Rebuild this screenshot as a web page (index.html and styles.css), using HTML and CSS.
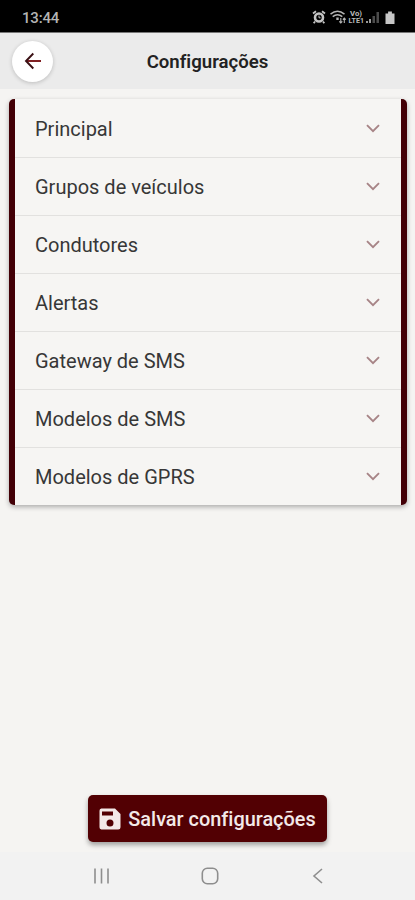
FILE: index.html
```html
<!DOCTYPE html>
<html lang="pt-BR">

<head>
    <meta charset="UTF-8">
    <meta name="viewport" content="width=device-width, initial-scale=1.0">
    <title>Configurações</title>
    <link rel="stylesheet" href="styles.css">
</head>

<body>
    <div class="status">
        <span class="time">13:44</span>
        <svg class="status-icons" width="84" height="16" viewBox="0 0 84 16">
            <!-- alarm -->
            <g fill="none" stroke="#c4c4c4">
                <circle cx="8" cy="8.5" r="4" stroke-width="2.6" />
                <path d="M8 6.5v2.3h1.6" stroke-width="1" />
                <path d="M2 4.5l3-2.3M14 4.5l-3-2.3M4 12.5l-1.3 1.8M12 12.5l1.3 1.8" stroke-width="1.8" />
            </g>
            <!-- wifi -->
            <g fill="none" stroke="#b5b5b5" stroke-width="1.5">
                <path d="M19.5 5.1q7-5.6 14 0" />
                <path d="M21.7 7.7q4.8-4 9.6 0" />
                <path d="M26.5 8.5v2.5" stroke-width="2.4" />
                <path d="M29.8 9v5M28.3 12.3l1.5 1.7 1.5-1.7M33.3 14V9M31.9 10.7l1.4-1.6 1.4 1.6" stroke-width="1.1" />
            </g>
            <g class="volte">
                <text x="39" y="6.6" textLength="12" lengthAdjust="spacingAndGlyphs">Vo)</text>
                <text x="37.5" y="14.4" textLength="15.5" lengthAdjust="spacingAndGlyphs">LTE1</text>
            </g>
            <!-- signal -->
            <path d="M55 14v-2h2v2zM58 14v-4h2v4z" fill="#999" />
            <path d="M61.5 14V7H64v7zM65.5 14V3H68v11z" fill="#4c4c4c" />
            <!-- battery -->
            <path d="M74.5 4.5h2.6V2.5h3.8v2h2.6V15h-9z" fill="#c6c6c6" />
        </svg>
    </div>

    <div class="header">
        <button class="back">
            <svg width="18" height="18" viewBox="0 0 18 18" fill="none" stroke-width="1.9">
                <path d="M2 9h15" stroke="#7a1518" />
                <path d="M9.3 1.5L2 9l7.3 7.5" stroke="#3a1014" />
            </svg>
        </button>
        <h1>Configurações</h1>
    </div>

    <div class="content">
        <ul class="menu">
            <li><span>Principal</span><svg class="arrow" viewBox="0 0 14 9"><path d="M1 1.2l6 6 6-6" /></svg></li>
            <li><span>Grupos de veículos</span><svg class="arrow" viewBox="0 0 14 9"><path d="M1 1.2l6 6 6-6" /></svg></li>
            <li><span>Condutores</span><svg class="arrow" viewBox="0 0 14 9"><path d="M1 1.2l6 6 6-6" /></svg></li>
            <li><span>Alertas</span><svg class="arrow" viewBox="0 0 14 9"><path d="M1 1.2l6 6 6-6" /></svg></li>
            <li><span>Gateway de SMS</span><svg class="arrow" viewBox="0 0 14 9"><path d="M1 1.2l6 6 6-6" /></svg></li>
            <li><span>Modelos de SMS</span><svg class="arrow" viewBox="0 0 14 9"><path d="M1 1.2l6 6 6-6" /></svg></li>
            <li><span>Modelos de GPRS</span><svg class="arrow" viewBox="0 0 14 9"><path d="M1 1.2l6 6 6-6" /></svg></li>
        </ul>

        <button class="save">
            <svg width="22" height="22" viewBox="0 0 22 22">
                <path fill="#f3e9e8" fill-rule="evenodd"
                    d="M2.3 0.5H16L21.5 6v13.2a2.3 2.3 0 0 1-2.3 2.3H2.3A2.3 2.3 0 0 1 0.5 19.2V2.8A2.3 2.3 0 0 1 2.3 0.5zM3 3.5v4h11v-4zM11 11.4a3.5 3.5 0 1 0 0 7a3.5 3.5 0 1 0 0-7z" />
            </svg>
            <span>Salvar configurações</span>
        </button>
    </div>

    <div class="navbar">
        <svg width="18" height="18" viewBox="0 0 18 18"><path d="M2 1.5v15M8.5 1.5v15M15 1.5v15" /></svg>
        <svg width="18" height="18" viewBox="0 0 18 18"><rect x="1.3" y="1.3" width="15.4" height="15.4" rx="5" /></svg>
        <svg width="18" height="18" viewBox="0 0 18 18"><path d="M13 2L5 9l8 7" /></svg>
    </div>
</body>

</html>
```

FILE: styles.css
```css
* {
    box-sizing: border-box;
}

body {
    margin: 0;
    height: 900px;
    display: flex;
    flex-direction: column;
    background-color: #f5f4f2;
    font-family: Roboto, "Liberation Sans", sans-serif;
    overflow: hidden;
}

.status {
    display: flex;
    justify-content: space-between;
    align-items: center;
    height: 33px;
    padding: 2px 20px 0 22px;
    background-color: #000;
    border-bottom: 1px solid #777;
}

.time {
    padding-top: 1px;
    color: #b4b4b4;
    font-size: 15px;
    font-weight: 500;
    letter-spacing: -0.2px;
}

.volte {
    fill: #bbb;
    font-size: 6.5px;
    font-weight: 700;
}

.header {
    display: grid;
    grid-template-columns: 42px 1fr 42px;
    align-items: center;
    height: 56px;
    padding: 0 12px;
    background-color: #ebebeb;
}

.header h1 {
    margin: 0;
    padding-top: 2px;
    text-align: center;
    color: #222;
    font-size: 18.6px;
    font-weight: 600;
    line-height: 24px;
    font-variant-ligatures: none;
}

.back {
    display: flex;
    justify-content: center;
    align-items: center;
    width: 41px;
    height: 41px;
    padding: 0;
    border: none;
    border-radius: 50%;
    background-color: #fff;
    box-shadow: 0 1px 4px rgba(0, 0, 0, 0.2);
}

.content {
    flex: 1;
    display: flex;
    flex-direction: column;
    justify-content: space-between;
    padding: 10px 8px 10px 9px;
}

.menu {
    margin: 0;
    padding: 1px 0 0;
    list-style: none;
    border-left: 6px solid #430006;
    border-right: 6px solid #430006;
    border-radius: 5px;
    background-color: #f6f5f3;
    box-shadow: 0 2px 5px rgba(0, 0, 0, 0.3);
}

.menu li {
    display: flex;
    justify-content: space-between;
    align-items: center;
    height: 58px;
    padding: 0 21px 0 20px;
    border-bottom: 1px solid #e2e1df;
    color: #373737;
    font-size: 20px;
}

.menu li:last-child {
    height: 57px;
    border-bottom: none;
}

.arrow {
    width: 14px;
    height: 9px;
    fill: none;
    stroke: #a78486;
    stroke-width: 1.9;
}

.save {
    display: flex;
    justify-content: center;
    align-items: center;
    gap: 7px;
    align-self: center;
    width: 239px;
    height: 47px;
    margin-right: 1px;
    padding: 0;
    border: none;
    border-radius: 5px;
    background-color: #520003;
    color: #f3e9e8;
    font-family: inherit;
    font-size: 19.9px;
    font-weight: 500;
    font-variant-ligatures: none;
    box-shadow: 0 3px 5px rgba(0, 0, 0, 0.35);
}

.save span {
    padding-top: 2px;
}

.navbar {
    display: flex;
    justify-content: space-between;
    align-items: center;
    height: 48px;
    padding: 0 88px 0 93px;
    background-color: #f2f2f2;
}

.navbar svg {
    fill: none;
    stroke: #8e8e8e;
    stroke-width: 1.6;
}
```
